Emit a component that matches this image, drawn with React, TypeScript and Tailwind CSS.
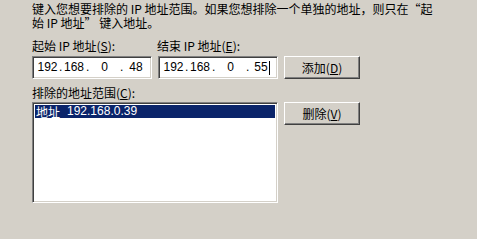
import React from "react";

const cjk = { fontFamily: '"Noto Sans CJK SC", "Liberation Sans", sans-serif' };
const sunken =
  "border border-t-[#808080] border-l-[#808080] border-b-white border-r-white shadow-[inset_1px_1px_0_#404040,inset_-1px_-1px_0_#d4d0c8] bg-white";
const raised =
  "border border-t-white border-l-white border-b-[#404040] border-r-[#404040] shadow-[inset_-1px_-1px_0_#808080] bg-[#d4d0c8]";

function IpBox({ parts, caret }: { parts: string[]; caret?: boolean }) {
  return (
    <div
      className={`${sunken} flex h-[23px] w-[120px] items-center pl-[3px] text-[12px] text-black`}
      style={{ fontFamily: '"Liberation Sans", Arial, sans-serif' }}
    >
      <span className="w-[23px] text-center">{parts[0]}</span>
      <span className="w-[3px]">.</span>
      <span className="w-[24px] text-center">{parts[1]}</span>
      <span className="w-[3px]">.</span>
      <span className="w-[31px] text-center">{parts[2]}</span>
      <span className="w-[3px]">.</span>
      <span className="flex w-[26px] items-center justify-center">
        {parts[3]}
        {caret && <span className="ml-px inline-block h-[14px] w-px bg-black" />}
      </span>
    </div>
  );
}

function Btn({ label, keyChar }: { label: string; keyChar: string }) {
  return (
    <button
      className={`${raised} flex h-[23px] w-[76px] items-center justify-center text-[12px] text-black`}
      style={cjk}
    >
      {label}(<span className="underline">{keyChar}</span>)
    </button>
  );
}

export default function App() {
  return (
    <div
      className="h-[239px] w-full bg-[#d4d0c8] pl-[32px] pt-[2px] text-[12px] leading-[13px] text-black"
      style={cjk}
    >
      <div className="flex flex-col leading-[14px]">
        <div>键入您想要排除的 IP 地址范围。如果您想排除一个单独的地址，则只在“起</div>
        <div>始 IP 地址” 键入地址。</div>
      </div>

      <div className="mt-[9px] flex">
        <span className="w-[125px]">
          起始 IP 地址(<span className="underline">S</span>):
        </span>
        <span>
          结束 IP 地址(<span className="underline">E</span>):
        </span>
      </div>

      <div className="mt-[4px] flex gap-[6px]">
        <IpBox parts={["192", "168", "0", "48"]} />
        <IpBox parts={["192", "168", "0", "55"]} caret />
        <Btn label="添加" keyChar="D" />
      </div>

      <div className="mt-[7px]">
        排除的地址范围(<span className="underline">C</span>):
      </div>

      <div className="mt-[3px] flex gap-[6px]">
        <div className={`${sunken} h-[101px] w-[246px] p-[2px]`}>
          <div className="flex h-[13px] items-center bg-[#0a246a] pl-px text-white">
            <span className="underline">地址</span>
            <span
              className="ml-[7px]"
              style={{ fontFamily: '"Liberation Sans", Arial, sans-serif' }}
            >
              192.168.0.39
            </span>
          </div>
        </div>
        <Btn label="删除" keyChar="V" />
      </div>
    </div>
  );
}
